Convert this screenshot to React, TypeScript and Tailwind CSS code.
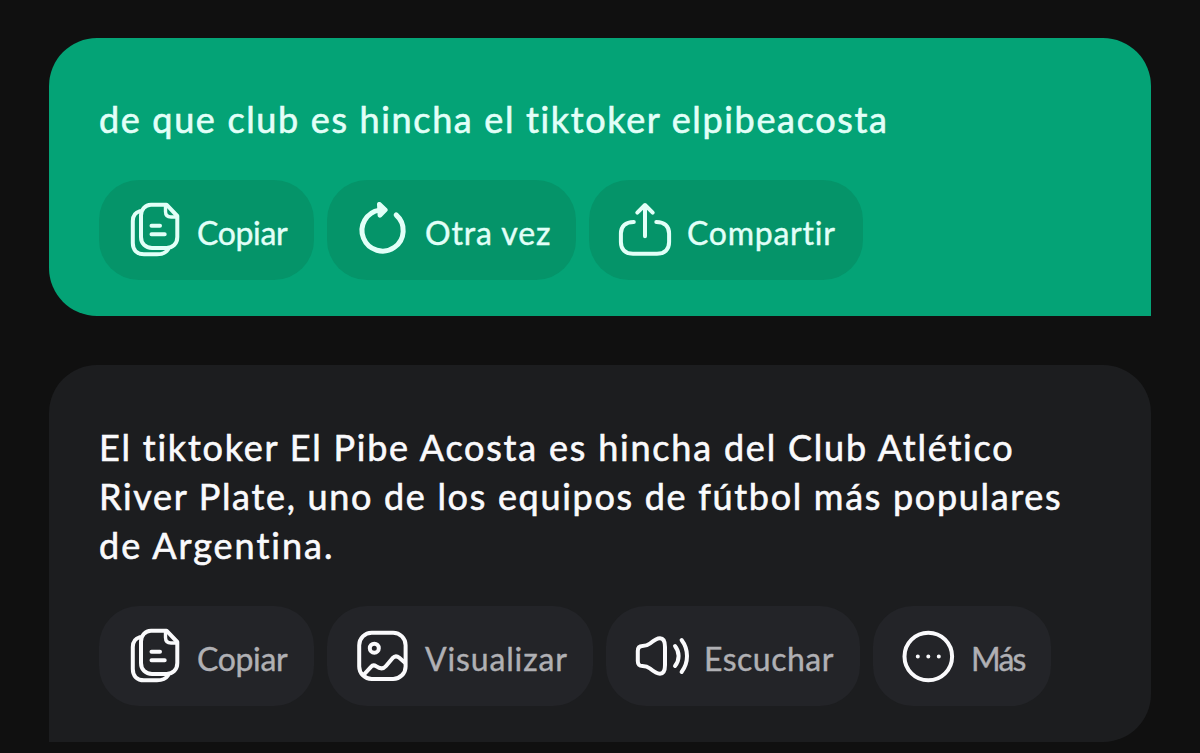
import type { ReactNode } from "react";

const Icon = ({ children }: { children: ReactNode }) => (
    <svg
        viewBox="0 0 56 56"
        className="size-14 shrink-0"
        fill="none"
        stroke="currentColor"
        strokeWidth="4"
        strokeLinecap="round"
        strokeLinejoin="round"
    >
        {children}
    </svg>
);

const CopyIcon = () => (
    <Icon>
        <path d="M39.5 2.7H24C18 2.7 14 8 14 13.5V35C14 41.5 18.5 46 25 46H39.5C46 46 50.3 41.5 50.3 35V14Z" />
        <path d="M38.5 3.5V9.5C38.5 13 40.5 15 44 15H49.5" strokeWidth="3.4" />
        <path d="M13 9.2C8.5 10.5 5.8 14 5.8 19V41C5.8 48 10 52.3 17 52.3H30C35 52.3 39 50.5 41 47.5" />
        <path d="M24.5 23.7H33M24.5 32.3H37.7" />
    </Icon>
);

const RetryIcon = () => (
    <Icon>
        <path d="M41.2 13A20.6 20.6 0 1 1 24.5 8.1" strokeWidth="5" />
        <path d="M24.3 2.2L30.3 7.9L24.9 13.4Z" fill="currentColor" strokeWidth="4.6" />
    </Icon>
);

const ShareIcon = () => (
    <Icon>
        <path d="M28 34.3V3.2M20.3 10.7L28 3L35.7 10.7" />
        <path d="M16.8 19.9C8.5 19.9 3.9 24 3.9 31.5V40C3.9 47.5 8.5 51.8 16 51.8H40C47.5 51.8 52.1 47.5 52.1 40V31.5C52.1 24 47.5 19.9 39.3 19.9" />
    </Icon>
);

const ImageIcon = () => (
    <Icon>
        <rect x="4.2" y="4.7" width="46.4" height="46.2" rx="12.5" />
        <circle cx="19.3" cy="20.2" r="4.5" />
        <path d="M8.5 47L16 38.8C17.5 37 19 36.7 21 38.2C25 41 28 41.5 31 38L37.5 30.2C39.5 28 42 27.8 44.3 29.8L50 34.7" />
    </Icon>
);

const SpeakerIcon = () => (
    <Icon>
        <path d="M3.8 23C3.8 19.5 5.5 18 8.5 18C11.5 18 13.5 17.5 16 15.5C19.5 12.6 22.5 10.3 26 10.3C29.5 10.3 31 13 31 19V37C31 43 29.5 45.7 26 45.7C22.5 45.7 19.5 43.4 16 40.5C13.5 38.5 11.5 38 8.5 38C5.5 38 3.8 36.5 3.8 33Z" />
        <path d="M41 18C45.8 24 45.8 32 41 38M47.6 12C54.8 21.5 54.8 34.5 47.6 44" />
    </Icon>
);

const MoreIcon = () => (
    <Icon>
        <circle cx="27.3" cy="28.5" r="23.8" />
        <path d="M16.8 28.5H16.81M27.3 28.5H27.31M37.8 28.5H37.81" />
    </Icon>
);

type ActionProps = {
    icon: ReactNode;
    label: string;
    className: string;
    labelClass: string;
};

const Action = ({ icon, label, className, labelClass }: ActionProps) => (
    <button type="button" className={`flex h-[100px] items-center gap-3.5 rounded-[40px] pl-7 ${className}`}>
        {icon}
        <span className={`whitespace-nowrap pt-1.5 text-[32px] leading-10 [-webkit-text-stroke:0.4px] ${labelClass}`}>{label}</span>
    </button>
);

const App = () => {
    return (
        <main className="flex h-[753px] w-[1200px] flex-col overflow-hidden bg-[#101010] px-[49px] pt-[38px] font-['Lato',sans-serif]">
            <section className="h-[278px] rounded-[48px] rounded-br-none bg-[#04a376] pl-[50px] pt-[57px] text-[#e2fff8]">
                <p className="whitespace-nowrap text-[36px] leading-[49px] [-webkit-text-stroke:0.6px]">
                    <span className="tracking-[1.65px]">de que club es hincha el tiktoker elpibeacosta</span>
                </p>
                <div className="mt-9 flex gap-[13px]">
                    <Action icon={<CopyIcon />} label="Copiar" className="w-[215px] bg-[#059469]" labelClass="tracking-[-0.35px]" />
                    <Action icon={<RetryIcon />} label="Otra vez" className="w-[249px] bg-[#059469]" labelClass="tracking-[0.9px]" />
                    <Action icon={<ShareIcon />} label="Compartir" className="w-[274px] bg-[#059469]" labelClass="tracking-[0.75px]" />
                </div>
            </section>

            <section className="mt-[49px] h-[377px] shrink-0 rounded-[48px] rounded-bl-none bg-[#1c1d1f] pl-[50px] pt-[58px] text-[#fafafc]">
                <p className="whitespace-nowrap text-[36px] leading-[49px] [-webkit-text-stroke:0.6px]">
                    <span className="tracking-[1.79px]">El tiktoker El Pibe Acosta es hincha del Club Atlético</span>
                    <br />
                    <span className="tracking-[1.69px]">River Plate, uno de los equipos de fútbol más populares</span>
                    <br />
                    <span className="tracking-[2px]">de Argentina.</span>
                </p>
                <div className="mt-9 flex gap-[13px]">
                    <Action icon={<CopyIcon />} label="Copiar" className="w-[215px] bg-[#232428]" labelClass="tracking-[-0.35px] text-[#b0b0b4]" />
                    <Action icon={<ImageIcon />} label="Visualizar" className="w-[266px] bg-[#232428]" labelClass="tracking-[0.85px] text-[#b0b0b4]" />
                    <Action icon={<SpeakerIcon />} label="Escuchar" className="w-[254px] bg-[#232428]" labelClass="tracking-[0.5px] text-[#b0b0b4]" />
                    <Action icon={<MoreIcon />} label="Más" className="w-[178px] bg-[#232428]" labelClass="tracking-[-1.8px] text-[#b0b0b4]" />
                </div>
            </section>
        </main>
    );
}

export default App;
